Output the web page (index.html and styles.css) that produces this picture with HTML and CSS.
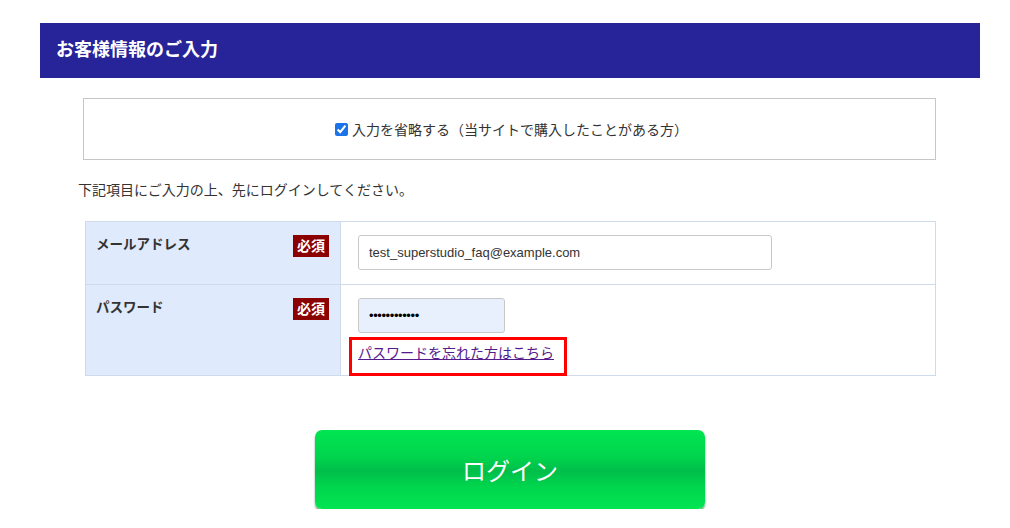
FILE: index.html
```html
<!DOCTYPE html>
<html lang="ja">
<head>
  <meta charset="UTF-8">
  <title>お客様情報のご入力</title>
  <link rel="stylesheet" href="styles.css">
</head>
<body>
  <div class="wrap">
    <h2 class="heading">お客様情報のご入力</h2>

    <div class="skip-box">
      <label><input type="checkbox" checked> 入力を省略する（当サイトで購入したことがある方）</label>
    </div>

    <p class="lead">下記項目にご入力の上、先にログインしてください。</p>

    <table class="form-table">
      <tr class="row-mail">
        <th><span>メールアドレス</span><em class="req">必須</em></th>
        <td><input type="text" class="in-mail" value="test_superstudio_faq@example.com"></td>
      </tr>
      <tr class="row-pass">
        <th><span>パスワード</span><em class="req">必須</em></th>
        <td>
          <input type="password" class="in-pass" value="aaaaaaaaaaaa">
          <div class="forgot">
            <a href="#">パスワードを忘れた方はこちら</a>
            <div class="mark"></div>
          </div>
        </td>
      </tr>
    </table>

    <div class="btn-area">
      <button class="login-btn">ログイン</button>
    </div>
  </div>
</body>
</html>
```

FILE: styles.css
```css
body {
  margin: 0;
  background: #fff;
  color: #333;
  font-family: "Liberation Sans", "Noto Sans CJK JP", sans-serif;
}
.wrap {
  width: 940px;
  margin: 23px 0 0 40px;
}
.heading {
  margin: 0;
  height: 55px;
  line-height: 55px;
  padding-left: 16px;
  background: #27249a;
  color: #fff;
  font-size: 18px;
  font-weight: bold;
}
.skip-box {
  margin: 20px 44px 0 43px;
  height: 60px;
  border: 1px solid #c6c6c6;
  display: flex;
  align-items: center;
  justify-content: center;
  font-size: 14px;
  color: #333;
}
.skip-box label {
  display: flex;
  align-items: center;
  padding-left: 4px;
}
.skip-box input {
  margin: 0 4px 0 0;
  width: 13px;
  height: 13px;
  accent-color: #1a73e8;
}
.lead {
  margin: 21px 0 0 38px;
  font-size: 14px;
  line-height: 18px;
  color: #333;
}
.form-table {
  margin: 22px 0 0 45px;
  width: 851px;
  border-collapse: collapse;
  border: 1px solid #cfdbeb;
}
.form-table th,
.form-table td {
  border: 1px solid #cfdbeb;
  vertical-align: top;
  padding: 0;
}
.form-table th {
  width: 255px;
  background: #dfeafc;
  text-align: left;
  font-size: 13.5px;
  font-weight: bold;
  color: #333;
  padding: 13px 11px 0 10px;
  box-sizing: border-box;
}
.form-table th span {
  float: left;
  margin-top: -2px;
}
.req {
  float: right;
  font-style: normal;
  background: #8b0000;
  color: #fff;
  font-size: 14px;
  line-height: 22px;
  padding: 0 4px;
  font-weight: bold;
}
.form-table td {
  padding: 13px 16px 0 17px;
}
.row-mail td {
  height: 49px;
}
.row-pass td {
  height: 77px;
}
.form-table input {
  box-sizing: border-box;
  height: 35px;
  border: 1px solid #c9c9c9;
  border-radius: 3px;
  padding: 0 10px;
  font-family: "Liberation Sans", sans-serif;
  font-size: 13px;
  color: #333;
  background: #fff;
}
.in-mail {
  width: 414px;
}
.in-pass {
  width: 147px;
  background: #e8f0fe !important;
  color: #000 !important;
  letter-spacing: -0.4px;
}
.forgot {
  position: relative;
  margin-top: 10px;
  font-size: 14px;
  line-height: 20px;
}
.forgot a {
  color: #551a8b;
}
.mark {
  position: absolute;
  left: -9px;
  top: -6px;
  width: 212px;
  height: 33px;
  border: 3px solid #ff0000;
}
.btn-area {
  display: flex;
  justify-content: center;
  margin-top: 54px;
}
.login-btn {
  width: 390px;
  height: 79px;
  border: none;
  border-radius: 7px;
  color: #fff;
  font-family: "Noto Sans CJK JP", sans-serif;
  font-size: 24px;
  background: linear-gradient(to bottom, #02e552 0%, #00d44d 35%, #00be4a 52%, #00d44d 70%, #02e552 100%);
  box-shadow: 0 2px 2px rgba(0, 100, 30, 0.6);
  cursor: pointer;
}
```
